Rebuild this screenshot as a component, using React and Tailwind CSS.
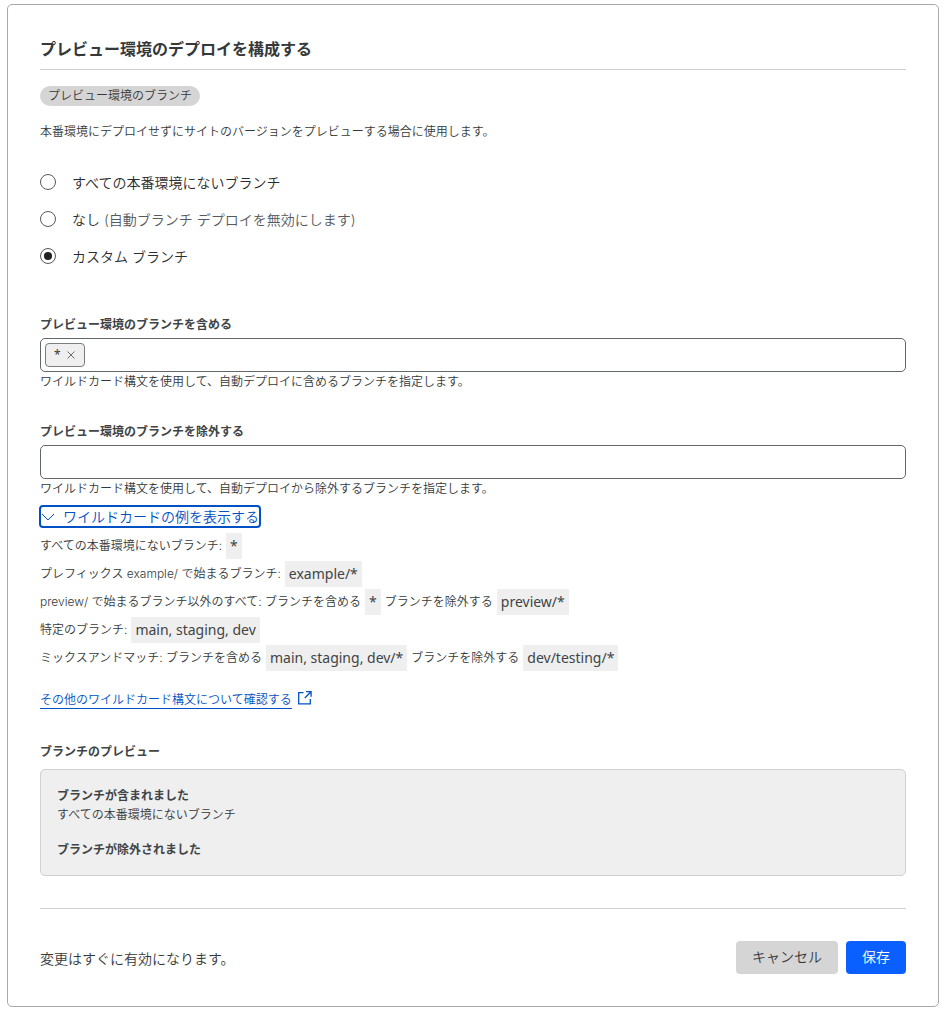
import { useState } from "react";

const branchModes = [
  { id: "all", label: "すべての本番環境にないブランチ" },
  { id: "none", label: "なし", note: "(自動ブランチ デプロイを無効にします)" },
  { id: "custom", label: "カスタム ブランチ" },
];

const examples = [
  ["すべての本番環境にないブランチ:", "*"],
  ["プレフィックス example/ で始まるブランチ:", "example/*"],
  ["preview/ で始まるブランチ以外のすべて: ブランチを含める", "*", "ブランチを除外する", "preview/*"],
  ["特定のブランチ:", "main, staging, dev"],
  ["ミックスアンドマッチ: ブランチを含める", "main, staging, dev/*", "ブランチを除外する", "dev/testing/*"],
];

function BranchField({ id, label, help, tags, onRemove }) {
  return (
    <div>
      <label htmlFor={id} className="block text-xs leading-[18px] font-bold text-[#404446]">
        {label}
      </label>
      <div className="mt-1 flex h-[34px] items-center rounded-[5px] border border-[#62676a] px-1 focus-within:border-[#0051c3]">
        {tags.map((tag) => (
          <span
            key={tag}
            className="flex h-6 items-center gap-[5px] rounded border border-[#797d80] bg-[#efefef] px-2 text-xs text-[#36393a]"
          >
            <span className="font-['Noto_Sans',sans-serif] font-normal">{tag}</span>
            <button type="button" aria-label={`${tag} を削除`} onClick={() => onRemove(tag)}>
              <svg width="10" height="10" viewBox="0 0 10 10" fill="none" stroke="#4a4e50" strokeWidth="0.8">
                <path d="M1.5 1.5l7 7M8.5 1.5l-7 7" />
              </svg>
            </button>
          </span>
        ))}
        <input id={id} type="text" className="h-full min-w-0 flex-1 bg-transparent px-2 text-sm outline-none" />
      </div>
      <p className="text-xs leading-[19px]">{help}</p>
    </div>
  );
}

export default function App() {
  const [mode, setMode] = useState("custom");
  const [included, setIncluded] = useState(["*"]);
  const [showExamples, setShowExamples] = useState(true);

  return (
    <main className="bg-white pt-1 pr-[13px] pb-1.5 pl-[7px] font-['Inter','Noto_Sans_CJK_JP',sans-serif] font-[350] text-[#36393a]">
      <form
        onSubmit={(e) => e.preventDefault()}
        className="rounded-[5px] border border-[#a9a9a9] bg-white p-8"
      >
        <h2 className="border-b border-[#d0d0d0] pb-2 text-base leading-6 font-bold text-[#36393a]">
          プレビュー環境のデプロイを構成する
        </h2>

        <div className="mt-4 flex">
          <span className="rounded-full bg-[#d5d5d5] px-2 text-xs leading-5">プレビュー環境のブランチ</span>
        </div>
        <p className="mt-4 text-xs leading-5">
          本番環境にデプロイせずにサイトのバージョンをプレビューする場合に使用します。
        </p>

        <fieldset aria-label="プレビュー環境のブランチ" className="mt-[30px] flex flex-col gap-[15px]">
          {branchModes.map(({ id, label, note }) => (
            <label key={id} className="flex items-start gap-4 text-sm leading-[22px] text-[#2a2c2d]">
              <input
                type="radio"
                name="mode"
                checked={mode === id}
                onChange={() => setMode(id)}
                className="mt-0.5 grid size-4 shrink-0 appearance-none place-content-center rounded-full border border-[#55595b] bg-white before:size-2 before:rounded-full checked:before:bg-[#222222]"
              />
              <span>
                {label}
                {note && <span className="text-[#565a5d]"> {note}</span>}
              </span>
            </label>
          ))}
        </fieldset>

        <div className="mt-12 flex flex-col gap-8">
          <BranchField
            id="include"
            label="プレビュー環境のブランチを含める"
            help="ワイルドカード構文を使用して、自動デプロイに含めるブランチを指定します。"
            tags={included}
            onRemove={(tag) => setIncluded(included.filter((t) => t !== tag))}
          />
          <BranchField
            id="exclude"
            label="プレビュー環境のブランチを除外する"
            help="ワイルドカード構文を使用して、自動デプロイから除外するブランチを指定します。"
            tags={[]}
          />
        </div>

        <div className="mt-[7px] flex">
          <button
            type="button"
            aria-expanded={showExamples}
            onClick={() => setShowExamples(!showExamples)}
            className="-ml-px flex items-center gap-2 rounded border-2 border-[#0051c3] text-sm leading-[19px] text-[#0051c3]"
          >
            <svg width="14" height="14" viewBox="0 0 14 14" fill="none" stroke="currentColor" strokeWidth="1">
              <path d="M1 4l6 6 6-6" />
            </svg>
            ワイルドカードの例を表示する
          </button>
        </div>

        {showExamples && (
          <ul className="mt-[5px] flex flex-col gap-0.5">
            {examples.map((parts) => (
              <li key={parts[0]} className="flex flex-wrap items-center gap-1 text-xs leading-[26px]">
                {parts.map((part, i) =>
                  i % 2 ? (
                    <code
                      key={i}
                      className="bg-[#efefef] px-1 font-['Noto_Sans',sans-serif] text-sm leading-[26px] font-normal text-[#404446]"
                    >
                      {part}
                    </code>
                  ) : (
                    <span key={i}>{part}</span>
                  )
                )}
              </li>
            ))}
          </ul>
        )}

        <p className="mt-5 flex items-start gap-1.5 text-[#0051c3]">
          <a href="#wildcards" className="border-b border-[#0051c3] text-xs leading-[17px]">
            その他のワイルドカード構文について確認する
          </a>
          <svg width="14" height="14" viewBox="0 0 14 14" fill="none" stroke="currentColor" strokeWidth="1.3" aria-hidden="true">
            <path d="M5.5 1.7H.7v11.1h11.6V8M8 .7h5.1v5.1M13 .8L6.8 7" />
          </svg>
        </p>

        <h3 className="mt-[34px] text-xs leading-[18px] font-bold text-[#404446]">ブランチのプレビュー</h3>
        <section className="mt-2 rounded-[5px] border border-[#d0d0d0] bg-[#efefef] p-4 text-xs leading-[19px]">
          <h4 className="font-bold text-[#404446]">ブランチが含まれました</h4>
          <p>すべての本番環境にないブランチ</p>
          <h4 className="mt-4 font-bold text-[#404446]">ブランチが除外されました</h4>
        </section>

        <footer className="mt-8 flex items-center justify-between gap-4 border-t border-[#d0d0d0] pt-8">
          <p className="pt-0.5 text-sm">変更はすぐに有効になります。</p>
          <div className="flex gap-2">
            <button type="button" className="h-[33px] rounded bg-[#d5d5d5] px-4 pb-0.5 text-sm">
              キャンセル
            </button>
            <button type="submit" className="h-[33px] rounded bg-[#0a60ff] px-4 pb-0.5 text-sm text-white">
              保存
            </button>
          </div>
        </footer>
      </form>
    </main>
  );
}
